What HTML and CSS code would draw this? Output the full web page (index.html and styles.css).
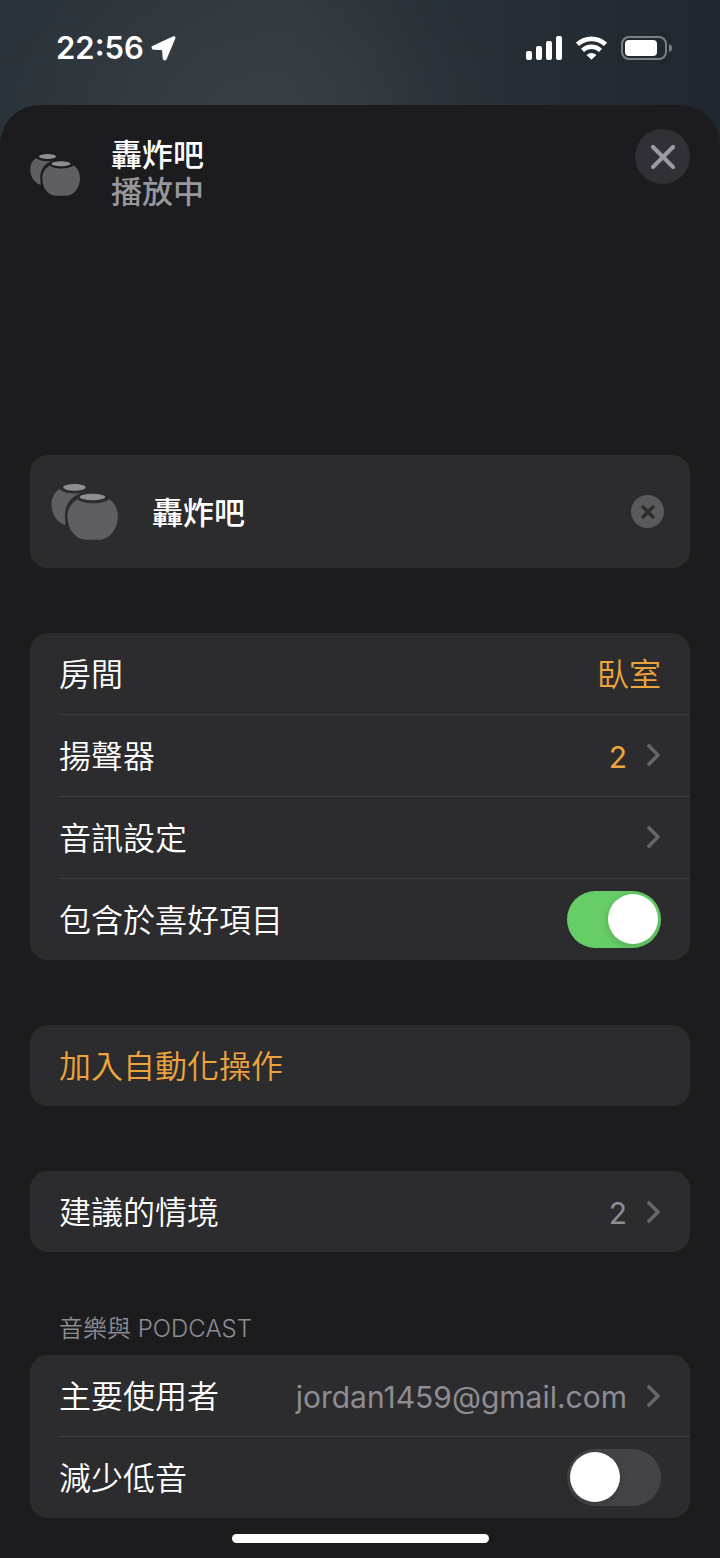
FILE: index.html
```html
<!DOCTYPE html>
<html lang="zh-Hant">
<head>
<meta charset="utf-8">
<meta name="viewport" content="width=device-width, initial-scale=1">
<title>轟炸吧</title>
<link rel="stylesheet" href="styles.css">
</head>
<body>
<svg class="defs" aria-hidden="true">
  <symbol id="pods" viewBox="0 0 200 168">
    <path class="pod-body" d="M24 16C38 28 66 32 92 26C60 36 40 62 41 97L43 124C16 114 1 90 1 62C1 42 10 26 24 16Z"/>
    <ellipse class="pod-top" cx="70" cy="10" rx="34" ry="10"/>
    <path class="pod-body" d="M80 46C95 62 156 62 174 46C190 56 200 74 200 97C200 135 175 167 145 167H105C72 167 49 135 49 97C49 74 61 56 80 46Z"/>
    <ellipse class="pod-top" cx="124" cy="39" rx="38" ry="10"/>
  </symbol>
  <symbol id="chevron" viewBox="0 0 14 24">
    <path d="M2 3L11 12L2 21" fill="none" stroke="currentColor" stroke-width="3.6" stroke-linecap="round" stroke-linejoin="round"/>
  </symbol>
</svg>

<header class="status">
  <div class="status-left">
    <time class="clock">22:56</time>
    <svg class="location" viewBox="0 0 72 74" aria-hidden="true"><path d="M67 5L5 34Q5 36 8 36L36 38L38 65Q39 71 42 65Z" fill="#fff" stroke="#fff" stroke-width="9" stroke-linejoin="round"/></svg>
  </div>
  <div class="status-right">
    <svg class="signal" viewBox="0 0 36 24" fill="#fff" aria-hidden="true"><rect x="0" y="15" width="6" height="9" rx="2"/><rect x="10" y="10" width="6" height="14" rx="2"/><rect x="20" y="5" width="6" height="19" rx="2"/><rect x="30" y="0" width="6" height="24" rx="2"/></svg>
    <svg class="wifi" viewBox="0 0 92 72" aria-hidden="true"><g fill="none" stroke="#fff"><path d="M4 25A62 62 0 0 1 88 25" stroke-width="14"/><path d="M19 43A39 39 0 0 1 73 43" stroke-width="13"/></g><path d="M46 71L31 57A22 22 0 0 1 61 57Z" fill="#fff"/></svg>
    <svg class="battery" viewBox="0 0 51 24" aria-hidden="true"><rect x="1" y="1" width="44" height="22" rx="7" fill="none" stroke="#7b8085" stroke-width="2"/><rect x="4" y="4" width="32" height="16" rx="4" fill="#fff"/><path d="M48 8Q51 9 51 12T48 16Z" fill="#7b8085"/></svg>
  </div>
</header>

<main class="sheet">
  <div class="sheet-header">
    <svg class="pods-small" aria-hidden="true"><use href="#pods"/></svg>
    <div class="heading">
      <h1 class="title">轟炸吧</h1>
      <p class="subtitle">播放中</p>
    </div>
    <button class="close" type="button" aria-label="關閉">
      <svg viewBox="0 0 24 24" aria-hidden="true"><path d="M2 2L22 22M22 2L2 22" fill="none" stroke="#9c9ba3" stroke-width="4" stroke-linecap="round"/></svg>
    </button>
  </div>

  <div class="card name-card">
    <svg class="pods-large" aria-hidden="true"><use href="#pods"/></svg>
    <input class="name-input" type="text" value="轟炸吧" aria-label="名稱">
    <button class="clear" type="button" aria-label="清除文字">
      <svg viewBox="0 0 14 14" aria-hidden="true"><path d="M2 2L12 12M12 2L2 12" fill="none" stroke="#2c2c2e" stroke-width="3.4" stroke-linecap="round"/></svg>
    </button>
  </div>

  <section class="card">
    <button class="row" type="button"><span class="label">房間</span><span class="value accent">臥室</span></button>
    <button class="row" type="button"><span class="label">揚聲器</span><span class="value latin accent">2</span><svg class="chevron" aria-hidden="true"><use href="#chevron"/></svg></button>
    <button class="row" type="button"><span class="label">音訊設定</span><svg class="chevron" aria-hidden="true"><use href="#chevron"/></svg></button>
    <div class="row"><label class="label" for="favorite">包含於喜好項目</label><input class="toggle" id="favorite" type="checkbox" role="switch" checked></div>
  </section>

  <section class="card">
    <button class="row" type="button"><span class="label accent">加入自動化操作</span></button>
  </section>

  <section class="card">
    <button class="row" type="button"><span class="label">建議的情境</span><span class="value latin">2</span><svg class="chevron" aria-hidden="true"><use href="#chevron"/></svg></button>
  </section>

  <h2 class="section-title">音樂與 PODCAST</h2>
  <section class="card titled">
    <button class="row" type="button"><span class="label">主要使用者</span><span class="value latin">jordan1459@gmail.com</span><svg class="chevron" aria-hidden="true"><use href="#chevron"/></svg></button>
    <div class="row"><label class="label" for="bass">減少低音</label><input class="toggle" id="bass" type="checkbox" role="switch"></div>
  </section>

  <div class="home-indicator"></div>
</main>
</body>
</html>
```
FILE: styles.css
```css
* {
  box-sizing: border-box;
}

body {
  margin: 0;
  min-height: 100vh;
  display: flex;
  flex-direction: column;
  color: #fff;
  font-family: Inter, "Noto Sans CJK TC", sans-serif;
  font-size: 32px;
  line-height: 40px;
  background:
    radial-gradient(ellipse 260px 150px at 35% 110px, rgba(66, 71, 74, 0.5), transparent),
    linear-gradient(90deg, #2a333a 0, #30383e 40%, #283038 60%, #20272e 100%);
}

button,
input {
  margin: 0;
  padding: 0;
  border: 0;
  background: none;
  color: inherit;
  font: inherit;
}

h1,
h2,
p {
  margin: 0;
}

svg {
  display: block;
  flex: none;
}

.defs {
  position: absolute;
  width: 0;
  height: 0;
}

.pod-body {
  fill: #5f5e63;
}

.pod-top {
  fill: #8f8e93;
}

/* Status bar */
.status {
  height: 105px;
  padding: 28px 48px 0 56px;
  display: flex;
  justify-content: space-between;
  align-items: flex-start;
}

.status-left,
.status-right {
  height: 40px;
  display: flex;
  align-items: center;
}

.status-left {
  gap: 7px;
}

.status-right {
  gap: 14px;
}

.clock {
  font-size: 31px;
  font-weight: 600;
}

.location {
  width: 25px;
  height: 25px;
}

.signal {
  width: 36px;
  height: 24px;
}

.wifi {
  width: 31px;
  height: 24px;
}

.battery {
  width: 51px;
  height: 24px;
}

/* Sheet */
.sheet {
  flex: 1;
  display: flex;
  flex-direction: column;
  padding: 24px 30px 15px;
  border-radius: 40px 40px 0 0;
  background: #1c1c1e;
}

.sheet-header {
  display: flex;
  align-items: flex-start;
  height: 326px;
}

.pods-small {
  width: 50px;
  height: 42px;
  margin: 25px 31px 0 0;
}

.heading {
  flex: 1;
  padding-top: 7px;
}

.title,
.subtitle {
  font-size: 31px;
  font-weight: 500;
  line-height: 37px;
}

.subtitle {
  color: #98979e;
}

.close {
  width: 55px;
  height: 55px;
  border-radius: 50%;
  display: grid;
  place-items: center;
  background: #313036;
}

.close svg {
  width: 24px;
  height: 24px;
}

.card {
  margin-bottom: 65px;
  border-radius: 18px;
  background: #2c2c2e;
}

.name-card {
  height: 113px;
  padding: 0 26px 0 21px;
  display: flex;
  align-items: center;
}

.pods-large {
  width: 67px;
  height: 56px;
}

.name-input {
  flex: 1;
  min-width: 0;
  margin-left: 34px;
  padding-top: 2px;
  font-size: 31px;
  font-weight: 500;
  outline: none;
}

.clear {
  width: 33px;
  height: 33px;
  border-radius: 50%;
  display: grid;
  place-items: center;
  background: #5a5a5c;
}

.clear svg {
  width: 14px;
  height: 14px;
}

/* Rows */
.row {
  position: relative;
  width: 100%;
  height: 81px;
  padding: 0 29px;
  display: flex;
  align-items: center;
  text-align: left;
}

.row + .row {
  height: 82px;
}

.row + .row::before {
  content: "";
  position: absolute;
  top: 0;
  left: 29px;
  right: 0;
  height: 1px;
  background: #3c3c3f;
}

.label,
.value {
  padding-top: 3px;
  white-space: nowrap;
  font-weight: 350;
}

.label {
  flex: 1;
}

.value {
  color: #8d8d93;
}

.latin {
  font-size: 30px;
  font-weight: 400;
}

.label.accent,
.value.accent {
  color: #eea43c;
}

.chevron {
  width: 14px;
  height: 24px;
  margin-left: 20px;
  color: #67676b;
}

.toggle {
  appearance: none;
  width: 94px;
  height: 57px;
  padding: 3px;
  border-radius: 29px;
  display: flex;
  align-items: center;
  background: #444348;
}

.toggle::before {
  content: "";
  width: 50px;
  height: 50px;
  border-radius: 50%;
  background: #fff;
  box-shadow: 0 2px 8px rgba(0, 0, 0, 0.18);
}

.toggle:checked {
  justify-content: flex-end;
  background: #67ce67;
}

.section-title {
  margin: -4px 29px 10px;
  color: #8d8d93;
  font-size: 24px;
  font-weight: 350;
  line-height: 32px;
}

.titled {
  margin-bottom: 16px;
}

.home-indicator {
  width: 257px;
  height: 9px;
  margin: 0 auto;
  border-radius: 5px;
  background: #fff;
}
```
